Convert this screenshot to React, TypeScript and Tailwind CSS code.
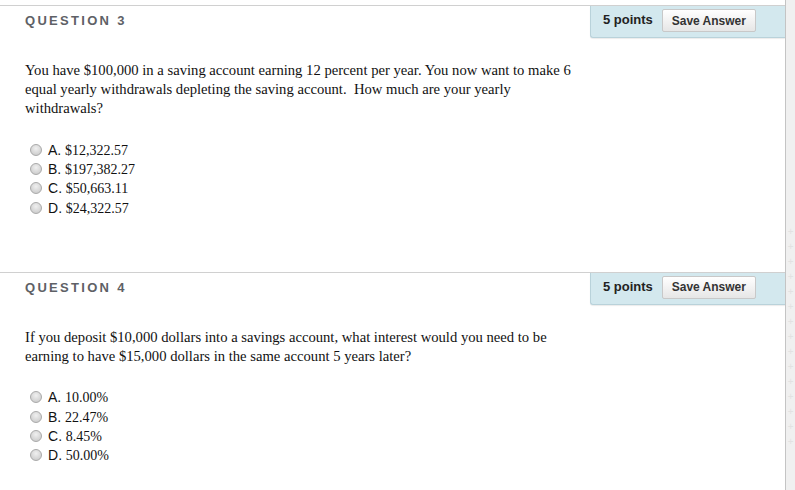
const questions = [
  {
    id: 3,
    text: 'You have $100,000 in a saving account earning 12 percent per year. You now want to make 6 equal yearly withdrawals depleting the saving account.\u00a0 How much are your yearly withdrawals?',
    options: ['$12,322.57', '$197,382.27', '$50,663.11', '$24,322.57'],
  },
  {
    id: 4,
    text: 'If you deposit $10,000 dollars into a savings account, what interest would you need to be earning to have $15,000 dollars in the same account 5 years later?',
    options: ['10.00%', '22.47%', '8.45%', '50.00%'],
  },
];

const letters = ['A', 'B', 'C', 'D'];

function Radio() {
  return (
    <span className="inline-block h-[12px] w-[12px] shrink-0 rounded-full border border-[#a9a9a9] bg-[radial-gradient(circle_at_50%_35%,#f0f0f0_0%,#d6d6d6_60%,#c4c4c4_100%)]" />
  );
}

function Question({ q }: { q: (typeof questions)[number] }) {
  return (
    <section className="border-t border-[#d0d0d0]">
      <div className="flex items-start justify-between">
        <h2 className="pl-[25px] pt-[5px] font-['Liberation_Sans',Arial,sans-serif] text-[13px] font-bold tracking-[2.3px] text-[#5e6166]">
          QUESTION {q.id}
        </h2>
        <div className="flex h-[32px] w-[195px] items-center rounded-bl-[3px] border-b border-l border-[#b9d2da] bg-[#d3e8ee] pl-[12px] font-['Liberation_Sans',Arial,sans-serif] shadow-[0_1px_1px_rgba(0,0,0,0.08)]">
          <span className="-mt-[3px] text-[13px] font-bold text-[#222]">5 points</span>
          <button
            type="button"
            className="ml-[9px] -mt-[2px] flex h-[23px] w-[94px] items-center justify-center rounded-[2px] border border-[#c8c8c8] bg-gradient-to-b from-white to-[#e6e6e6] text-[12px] font-bold text-[#333]"
          >
            Save Answer
          </button>
        </div>
      </div>

      <p className="mt-[23px] w-[575px] pl-[25px] font-['Liberation_Serif','Times_New_Roman',serif] text-[14.65px] leading-[19px] text-[#111]">
        {q.text}
      </p>

      <ul className="mt-[22px] pl-[30px] text-[14px] leading-[19px] text-[#111]">
        {q.options.map((opt, i) => (
          <li key={opt} className="flex h-[19.4px] items-center gap-[6px]">
            <Radio />
            <span>
              <span className="font-['Liberation_Sans',Arial,sans-serif]">{letters[i]}.</span>{' '}
              <span className="font-['Liberation_Serif','Times_New_Roman',serif]">{opt}</span>
            </span>
          </li>
        ))}
      </ul>
    </section>
  );
}

export default function App() {
  return (
    <div className="flex h-[490px] w-[795px] overflow-hidden bg-white">
      <main className="w-[785px] pt-[5px]">
        <Question q={questions[0]} />
        <div className="h-[54px]" />
        <Question q={questions[1]} />
      </main>
      <aside className="flex w-[10px] flex-col items-center border-l border-[#c4c4c4] bg-[#f0f0f0] pt-[224px]">
        {Array.from({ length: 15 }).map((_, i) => (
          <span key={i} className="h-[15px] text-[10px] leading-[15px] text-[#e2e2e2]">
            +
          </span>
        ))}
      </aside>
    </div>
  );
}
